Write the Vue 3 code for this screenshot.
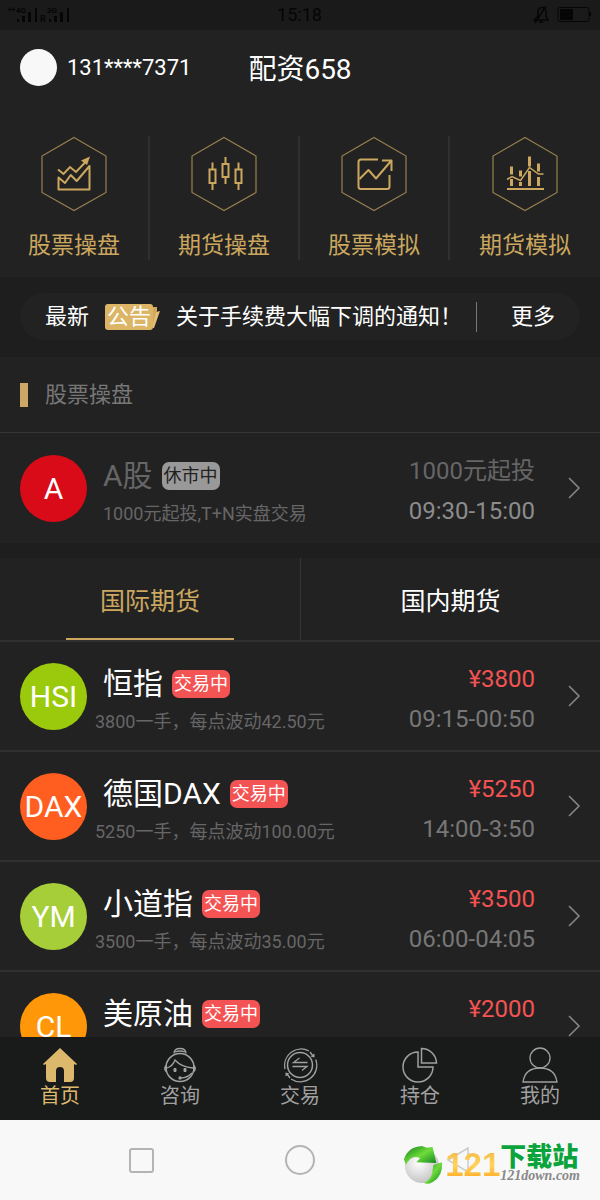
<script setup>
const shortcuts = [
  { label: '股票操盘', icon: 'area' },
  { label: '期货操盘', icon: 'candles' },
  { label: '股票模拟', icon: 'trend' },
  { label: '期货模拟', icon: 'bars' },
]

const futures = [
  { code: 'HSI', tone: 'lime', name: '恒指', note: '3800一手，每点波动42.50元', price: '¥3800', hours: '09:15-00:50' },
  { code: 'DAX', tone: 'orange', name: '德国DAX', note: '5250一手，每点波动100.00元', price: '¥5250', hours: '14:00-3:50' },
  { code: 'YM', tone: 'green', name: '小道指', note: '3500一手，每点波动35.00元', price: '¥3500', hours: '06:00-04:05' },
  { code: 'CL', tone: 'amber', name: '美原油', note: '', price: '¥2000', hours: '' },
]

const tabs = [
  { label: '首页', icon: 'home' },
  { label: '咨询', icon: 'service' },
  { label: '交易', icon: 'trade' },
  { label: '持仓', icon: 'pie' },
  { label: '我的', icon: 'user' },
]
</script>

<template>
  <div class="app">
    <div class="status">
      <svg class="signal" width="64" height="18" viewBox="0 0 64 18">
        <path d="M1 3.500h6M2.500 1.500L0.500 3.500 2.500 5.500M5.500 1.500v4" fill="none" stroke="#060606" />
        <path d="M9 13h2v3h-2zM14 10h3v6h-3zM20 6h3v10h-3zM27 2h2v14h-2zM41 13h2v3h-2zM46 10h3v6h-3zM52 6h3v10h-3zM59 2h2v14h-2z" fill="#060606" />
        <text x="8" y="7" font-size="8">4G</text>
        <text x="39" y="7" font-size="8">3G</text>
        <text x="32" y="16" font-size="9">R</text>
      </svg>
      <time class="clock">15:18</time>
      <svg class="power" width="58" height="18" viewBox="0 0 58 18">
        <g fill="none" stroke="#060606" stroke-width="1.500">
          <path d="M1 14h14l-2-4V6a4 4 0 0 0-8-1v5zM6 16h4M13 0L2 17" />
          <rect x="25" y="1.500" width="31" height="14" rx="2" stroke-width="1" />
        </g>
        <path d="M27 3h13v11H27zM56 6h2v4h-2z" fill="#060606" />
      </svg>
    </div>

    <header class="top">
      <a class="account" href="#account"><span class="avatar"></span><span>131****7371</span></a>
      <h1>配资658</h1>
    </header>

    <nav class="shortcuts">
      <a v-for="s in shortcuts" :key="s.label" class="shortcut" href="#open">
        <svg width="66" height="76" viewBox="0 0 66 76" fill="none" stroke="#cba75f" stroke-width="2">
          <path d="M33 1.500L65 20v36.500L33 74.500 1 56.500V20z" stroke="#98804f" stroke-width="1.200" />
          <g v-if="s.icon === 'area'">
            <path d="M17.500 41.500l6.500 5.500 5.700-8 6 6 12.800-15v23.500h-31z" stroke-linejoin="round" />
            <path d="M17 33.500l5.500 4.500 6.500-7 6 5L45 25.500" />
            <path d="M49 20.500l-9 4 6 4.500z" fill="#cba75f" stroke="none" />
          </g>
          <g v-else-if="s.icon === 'candles'">
            <path d="M21.500 26.500v7M21.500 47v7M34.500 21v7M34.500 41v7M47.500 26.500v7M47.500 47v7" />
            <path d="M18.500 33.500h6v13.500h-6zM31.500 28h6v13h-6zM44.500 33.500h6v13.500h-6z" />
          </g>
          <g v-else-if="s.icon === 'trend'" stroke-linejoin="round">
            <path d="M37 23.500H20q-2.500 0-2.500 2.500v24.500q0 2.500 2.500 2.500h26q2.500 0 2.500-2.500V39" />
            <path d="M18.500 43l9-9 7.500 8.500L50 25M41 24.500h9.500V35" />
          </g>
          <g v-else>
            <path d="M15 53h37" />
            <path d="M19.500 30.500v8M19.500 43v7M28.500 34.500v6M28.500 46v4M37.500 20.500v10M37.500 35v15M46.500 27.500v8M46.500 41v9" stroke-width="3" />
            <path d="M15 43.500l5-3 8.500 4 9-13 9 6.500h5" stroke-width="1.500" />
          </g>
        </svg>
        <span>{{ s.label }}</span>
      </a>
    </nav>

    <section class="notice">
      <div class="pill">
        <span class="latest">最新</span>
        <span class="tag">公告
          <svg width="8" height="26" viewBox="0 0 8 26">
            <path d="M0 3h4v4L0 24z" fill="#d0a95c" />
            <path d="M3 8l4-1-6 17H0v-4z" fill="#e3bf77" />
          </svg>
        </span>
        <a class="headline" href="#notice">关于手续费大幅下调的通知！</a>
        <a class="more" href="#more">更多</a>
      </div>
    </section>

    <main class="content">
      <h2 class="section-title">股票操盘</h2>

      <a class="row closed" href="#a-share">
        <span class="badge red">A</span>
        <span class="info">
          <span class="name">A股<em class="state">休市中</em></span>
          <span class="note">1000元起投,T+N实盘交易</span>
        </span>
        <span class="figures"><span class="price">1000元起投</span><span class="hours">09:30-15:00</span></span>
        <svg class="chevron" width="14" height="22" viewBox="0 0 14 22"><path d="M2 1l10 10L2 21" /></svg>
      </a>

      <div class="market-tabs">
        <button type="button" class="market active"><span>国际期货</span></button>
        <button type="button" class="market"><span>国内期货</span></button>
      </div>

      <a v-for="f in futures" :key="f.code" class="row" href="#future">
        <span class="badge" :class="f.tone">{{ f.code }}</span>
        <span class="info">
          <span class="name">{{ f.name }}<em class="state">交易中</em></span>
          <span class="note">{{ f.note }}</span>
        </span>
        <span class="figures"><span class="price">{{ f.price }}</span><span class="hours">{{ f.hours }}</span></span>
        <svg class="chevron" width="14" height="22" viewBox="0 0 14 22"><path d="M2 1l10 10L2 21" /></svg>
      </a>
    </main>

    <nav class="tabbar">
      <a v-for="t in tabs" :key="t.label" class="tab" :class="{ current: t.icon === 'home' }" href="#tab">
        <svg width="36" height="36" viewBox="0 0 36 36" fill="none" stroke="#a0a0a0" stroke-width="1.300">
          <path v-if="t.icon === 'home'" d="M18 1L1 17l1 1 2-1v14q0 4 4 4h6V24q0-4 4-4t4 4v11h6q4 0 4-4V17l2 1 1-1z" fill="#dcb86c" stroke="none" />
          <g v-else-if="t.icon === 'service'">
            <circle cx="18" cy="20.500" r="14" stroke-width="1.500" />
            <path d="M12 6.500q0-5 6-5t6 5M13 5q5-2 10 0M5 21q6-2 8-8 6 7 18 8" />
            <path d="M4.500 18v7q-2-1-2-3.500t2-3.500zM31.500 18v7q2-1 2-3.500t-2-3.500zM12 21.500h2v3h-2zM22 21.500h2v3h-2z" fill="#a0a0a0" stroke-width="1" />
            <path d="M30 26q-5 5-11 5" />
            <circle cx="18" cy="31" r="1" fill="#a0a0a0" />
          </g>
          <g v-else-if="t.icon === 'trade'">
            <circle cx="18" cy="18" r="12.500" stroke-width="1.500" />
            <path d="M3 22A16.500 16.500 0 0 1 27 4M33.700 12.500A16.500 16.500 0 0 1 9 32M28 5l3 4M8 31l-3-4" />
            <path d="M32.500 6.500v4l-4-1zM3.500 29.500v-4l4 1z" fill="#a0a0a0" stroke="none" />
            <path d="M17.500 11l-6 4.500h14M10.500 19.500H25l-5 4" />
          </g>
          <g v-else-if="t.icon === 'pie'" stroke-width="1.500">
            <path d="M16 5A15 15 0 1 0 31 20H16z" />
            <path d="M19.500 1.500A15 15 0 0 1 34.500 16h-15z" />
          </g>
          <g v-else>
            <circle cx="18" cy="11" r="10" />
            <path d="M1 35q2-14 17-14t17 14z" />
          </g>
        </svg>
        <span>{{ t.label }}</span>
      </a>
    </nav>

    <footer class="system">
      <button type="button" aria-label="Recent apps"><span class="square"></span></button>
      <button type="button" aria-label="Home"><span class="circle"></span></button>
      <button type="button" aria-label="Back">
        <svg width="28" height="28" viewBox="0 0 28 28"><path d="M23 2L3 14l20 12z" fill="none" stroke="#ccc" stroke-width="1.500" /></svg>
      </button>
      <div class="brand">
        <svg width="40" height="40" viewBox="0 0 42 42">
          <defs>
            <radialGradient id="ball" cx="0.4" cy="0.4" r="0.7"><stop offset="0" stop-color="#fff" /><stop offset="1" stop-color="#bcbcbc" /></radialGradient>
            <linearGradient id="leaf" x1="0" y1="0" x2="1" y2="1"><stop offset="0" stop-color="#0c7a1c" /><stop offset="0.500" stop-color="#6fdc3c" /><stop offset="1" stop-color="#087d1a" /></linearGradient>
          </defs>
          <circle cx="20" cy="22" r="18" fill="url(#ball)" />
          <path d="M1 15Q5 2 20 1l5 2 6-1 4 17-21-1 4-4q-9-5-15 7z" fill="url(#leaf)" />
          <path d="M32 21l9-3q1 15-10 21-5 3-9 1 9-5 9-13z" fill="url(#leaf)" />
        </svg>
        <strong>121</strong>
        <span class="site"><b>下载站</b><i>121down.com</i></span>
      </div>
    </footer>
  </div>
</template>

<style>
body {
  margin: 0;
  background: #212121;
}
</style>

<style scoped>
.app {
  display: flex;
  flex-direction: column;
  height: 100vh;
  overflow: hidden;
  background: #222;
  color: #fff;
  font-family: Roboto, "Noto Sans CJK SC", sans-serif;
}
a {
  color: inherit;
  text-decoration: none;
}
button {
  padding: 0;
  border: 0;
  background: none;
  color: inherit;
  font: inherit;
}
.status {
  display: grid;
  grid-template-columns: 1fr auto 1fr;
  align-items: center;
  flex: none;
  height: 30px;
  padding: 0 9px 0 8px;
  background: #1a1a1a;
  color: #050505;
}
.signal text {
  fill: #060606;
  font-weight: 700;
}
.clock {
  font-size: 18px;
  line-height: 30px;
}
.power {
  justify-self: end;
}
.top {
  display: grid;
  grid-template-columns: 1fr auto 1fr;
  align-items: center;
  flex: none;
  height: 74px;
  padding: 0 20px;
}
.account {
  display: flex;
  align-items: center;
  gap: 10px;
  font-size: 22px;
}
.avatar {
  width: 37px;
  height: 37px;
  border-radius: 50%;
  background: #f8f8f8;
}
h1 {
  margin: 0;
  font-size: 28px;
  font-weight: 400;
}
.shortcuts {
  display: grid;
  grid-template-columns: repeat(4, 1fr);
  flex: none;
  padding: 32px 0 17px;
}
.shortcut {
  display: flex;
  flex-direction: column;
  align-items: center;
  gap: 18px;
  height: 124px;
  border-right: 2px solid #303030;
  color: #cba75f;
  font-size: 23px;
  line-height: 32px;
}
.shortcut svg {
  flex: none;
}
.shortcut:last-child {
  border-right: 0;
}
.notice {
  flex: none;
  padding: 16px 20px 17px;
  background: #1e1e1e;
}
.pill {
  display: flex;
  align-items: center;
  height: 47px;
  padding: 0 25px;
  border-radius: 24px;
  background: #222;
  font-size: 22px;
  line-height: 30px;
  white-space: nowrap;
}
.tag {
  position: relative;
  margin: 0 23px 0 16px;
  padding: 0 2px;
  border-radius: 3px;
  background: #dcb566;
  line-height: 26px;
}
.tag svg {
  position: absolute;
  top: 0;
  left: 100%;
}
.headline {
  flex: 1;
}
.more {
  padding-left: 34px;
  border-left: 1px solid #777;
}
.content {
  flex: 1;
  min-height: 0;
  overflow: hidden;
}
.section-title {
  display: flex;
  align-items: center;
  gap: 17px;
  height: 75px;
  margin: 0;
  padding: 0 20px;
  border-bottom: 1px solid #363636;
  color: #777;
  font-size: 22px;
  font-weight: 400;
  line-height: 30px;
}
.section-title::before {
  width: 8px;
  height: 24px;
  background: #cba866;
  content: "";
}
.row {
  display: flex;
  align-items: center;
  box-sizing: border-box;
  height: 110px;
  padding: 0 19px 0 20px;
  border-bottom: 2px solid #303030;
}
.badge {
  display: flex;
  align-items: center;
  justify-content: center;
  flex: none;
  width: 67px;
  height: 67px;
  border-radius: 50%;
  font-size: 30px;
}
.red { background: #d90b18; }
.lime { background: #9bca0d; }
.orange { background: #ff5e20; }
.green { background: #a6ce38; }
.amber { background: #ff9708; }
.info {
  flex: 1;
  padding: 8px 0 0 8px;
  white-space: nowrap;
}
.name {
  display: flex;
  align-items: center;
  gap: 9px;
  padding-left: 8px;
  font-size: 30px;
  line-height: 44px;
}
.state {
  padding: 0 2px;
  border-radius: 7px;
  background: #f45353;
  font-size: 18px;
  font-style: normal;
  line-height: 28px;
}
.note {
  display: block;
  min-height: 32px;
  color: #666;
  font-size: 18px;
  line-height: 32px;
}
.figures {
  display: flex;
  flex-direction: column;
  align-items: flex-end;
  padding: 6px 32px 0 0;
  color: #777;
  font-size: 24px;
  line-height: 40px;
}
.hours {
  min-height: 40px;
}
.price {
  color: #f45353;
}
.chevron {
  flex: none;
  fill: none;
  stroke: #888;
  stroke-width: 1.5;
}
.closed {
  border-bottom: 0;
}
.closed .name,
.closed .price {
  color: #666;
}
.closed .state {
  background: #999;
  color: #222;
}
.closed .note {
  padding-left: 8px;
}
.closed .hours {
  color: #8c8c8c;
}
.market-tabs {
  display: grid;
  grid-template-columns: 1fr 1fr;
  height: 82px;
  border-top: 15px solid #1e1e1e;
  border-bottom: 2px solid #303030;
  font-size: 25px;
}
.market {
  display: flex;
  justify-content: center;
}
.market + .market {
  border-left: 1px solid #363636;
}
.market span {
  display: flex;
  align-items: center;
  justify-content: center;
  box-sizing: border-box;
  width: 56%;
  height: 100%;
  padding-top: 2px;
  border-bottom: 2px solid transparent;
}
.active span {
  border-bottom-color: #cba75f;
  color: #cba75f;
}
.tabbar {
  display: grid;
  grid-template-columns: repeat(5, 1fr);
  flex: none;
  height: 83px;
  background: #191a1a;
}
.tab {
  display: flex;
  flex-direction: column;
  align-items: center;
  padding-top: 10px;
  color: #a0a0a0;
  font-size: 20px;
  line-height: 26px;
}
.current {
  color: #dcb86c;
}
.system {
  position: relative;
  display: grid;
  grid-template-columns: repeat(3, 1fr);
  place-items: center;
  flex: none;
  height: 80px;
  padding: 0 62px;
  background: #f8f8f8;
}
.system button {
  display: flex;
}
.square,
.circle {
  box-sizing: border-box;
  width: 25px;
  height: 25px;
  border: 2px solid #b4b4b4;
  border-radius: 3px;
}
.circle {
  width: 30px;
  height: 30px;
  border-radius: 50%;
}
.brand {
  position: absolute;
  top: 25px;
  right: 20px;
  display: flex;
  align-items: center;
}
.brand strong {
  margin-left: 2px;
  background: linear-gradient(#f0b142, #ffd35c 50%, #ff9d0c);
  background-clip: text;
  color: transparent;
  font-family: "Liberation Sans", sans-serif;
  font-size: 33px;
  line-height: 40px;
}
.site {
  display: flex;
  flex-direction: column;
}
.site b {
  color: #0ba43c;
  font-size: 26px;
  font-weight: 900;
  line-height: 22px;
}
.site i {
  color: #888;
  font-family: "Liberation Serif", serif;
  font-size: 14px;
  font-weight: 700;
  line-height: 16px;
}
</style>
